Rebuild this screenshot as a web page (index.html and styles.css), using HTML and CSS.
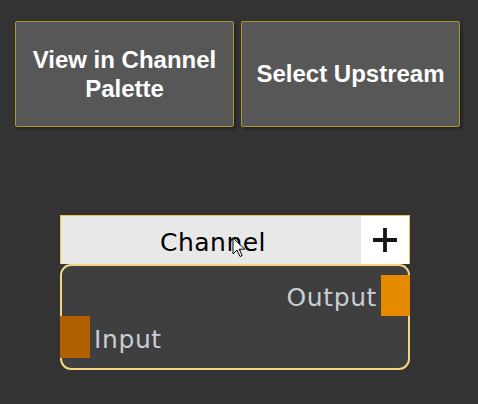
FILE: index.html
```html
<!DOCTYPE html>
<html>
<head>
<meta charset="utf-8">
<link rel="stylesheet" href="styles.css">
</head>
<body>
<div class="toolbar">
  <button class="btn">View in Channel Palette</button>
  <button class="btn">Select Upstream</button>
</div>
<div class="node">
  <div class="node-header">
    <div class="node-title">Channel</div>
    <div class="node-add">
      <svg width="24" height="24" viewBox="0 0 24 24"><path d="M12 0v24M0 12h24" stroke="#141414" stroke-width="3.8" fill="none"/></svg>
    </div>
    <svg class="cursor" width="14" height="21" viewBox="0 0 14 21"><path d="M1 1v16l4-4 3 6.5 2.2-1-3-6.3h5.6z" fill="#fff" stroke="#000" stroke-width="1" stroke-linejoin="round"/></svg>
  </div>
  <div class="node-body">
    <div class="port-row out">
      <span class="port-label">Output</span>
      <span class="port port-out"></span>
    </div>
    <div class="port-row in">
      <span class="port port-in"></span>
      <span class="port-label">Input</span>
    </div>
  </div>
</div>
</body>
</html>
```
FILE: styles.css
```css
html, body {
  margin: 0;
  padding: 0;
  background: #333333;
  width: 478px;
  height: 404px;
  overflow: hidden;
}
.toolbar {
  display: flex;
  gap: 7px;
  padding: 21px 0 0 15px;
}
.btn {
  width: 219px;
  height: 106px;
  margin: 0;
  padding: 0 6px;
  background: #575757;
  border: 1px solid #ab962a;
  border-radius: 2px;
  box-shadow: 2px 2px 3px rgba(0,0,0,0.35);
  color: #ffffff;
  font-family: "Liberation Sans", Arial, sans-serif;
  font-weight: bold;
  font-size: 24px;
  line-height: 29.5px;
  text-align: center;
}
.node {
  margin: 88px 0 0 60px;
  width: 350px;
}
.node-header {
  position: relative;
  display: flex;
  height: 49px;
  box-sizing: border-box;
  border: 1px solid #f0c24c;
  border-bottom: none;
  background: #e8e8e8;
}
.node-title {
  flex: 1;
  display: flex;
  align-items: center;
  justify-content: center;
  padding: 4px 0 0 4px;
  font-family: "DejaVu Sans", sans-serif;
  font-size: 25px;
  letter-spacing: 0.5px;
  color: #000;
}
.node-add {
  width: 48px;
  background: #ffffff;
  display: flex;
  align-items: center;
  justify-content: center;
}
.cursor {
  position: absolute;
  left: 171px;
  top: 21px;
}
.node-body {
  height: 106px;
  box-sizing: border-box;
  border: 2px solid #f4d47e;
  border-radius: 11px;
  background: #3f3f3f;
  padding-top: 9px;
  display: flex;
  flex-direction: column;
}
.port-row {
  display: flex;
  align-items: center;
  gap: 4px;
  font-family: "DejaVu Sans", sans-serif;
  font-size: 25px;
  letter-spacing: 0.6px;
  color: #c9cdd4;
}
.port-label {
  padding-top: 4px;
}
.port-row.out {
  justify-content: flex-end;
  height: 41px;
  margin-right: -2px;
}
.port-row.in {
  justify-content: flex-start;
  height: 42px;
  margin-left: -2px;
}
.port {
  display: block;
  height: 100%;
  width: 29px;
}
.port-out {
  background: #e68a00;
}
.port-in {
  width: 30px;
  background: #b06000;
}
```
